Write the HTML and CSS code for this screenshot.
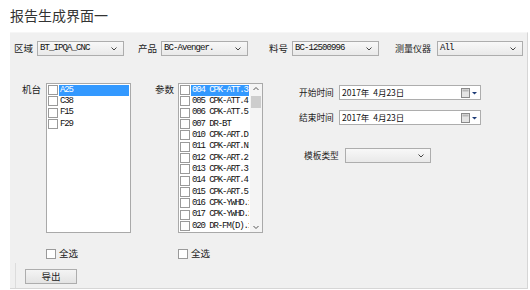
FILE: index.html
```html
<!DOCTYPE html>
<html lang="zh">
<head>
<meta charset="utf-8">
<title>报告生成界面一</title>
<link rel="stylesheet" href="styles.css">
</head>
<body>
<div class="title">报告生成界面一</div>
<div class="panel">
  <div class="toprow">
    <div class="field f1"><span class="lbl">区域</span><div class="combo w87"><span class="ctext">BT_IPQA_CNC</span><svg class="chev" width="6" height="4" viewBox="0 0 6 4"><polyline points="0.5,0.5 3,3 5.5,0.5" fill="none" stroke="#444" stroke-width="1"/></svg></div></div>
    <div class="field f2"><span class="lbl">产品</span><div class="combo w87"><span class="ctext">BC-Avenger.</span><svg class="chev" width="6" height="4" viewBox="0 0 6 4"><polyline points="0.5,0.5 3,3 5.5,0.5" fill="none" stroke="#444" stroke-width="1"/></svg></div></div>
    <div class="field f3"><span class="lbl">料号</span><div class="combo w87"><span class="ctext">BC-12500996</span><svg class="chev" width="6" height="4" viewBox="0 0 6 4"><polyline points="0.5,0.5 3,3 5.5,0.5" fill="none" stroke="#444" stroke-width="1"/></svg></div></div>
    <div class="field f4"><span class="lbl l4">测量仪器</span><div class="combo w86"><span class="ctext">All</span><svg class="chev" width="6" height="4" viewBox="0 0 6 4"><polyline points="0.5,0.5 3,3 5.5,0.5" fill="none" stroke="#444" stroke-width="1"/></svg></div></div>
  </div>

  <div class="main">
    <span class="lbl side l1">机台</span>
    <div class="col">
      <div class="listbox">
        <div class="items">
          <div class="item"><span class="cb"></span><span class="itext sel">A25</span></div>
          <div class="item"><span class="cb"></span><span class="itext">C38</span></div>
          <div class="item"><span class="cb"></span><span class="itext">F15</span></div>
          <div class="item"><span class="cb"></span><span class="itext">F29</span></div>
        </div>
      </div>
      <div class="selall"><span class="cb"></span><span class="lbl">全选</span></div>
    </div>

    <span class="lbl side l2">参数</span>
    <div class="col">
      <div class="listbox">
        <div class="items">
          <div class="item"><span class="cb"></span><span class="itext sel">004 CPK-ATT.3</span></div>
          <div class="item"><span class="cb"></span><span class="itext">005 CPK-ATT.4</span></div>
          <div class="item"><span class="cb"></span><span class="itext">006 CPK-ATT.5</span></div>
          <div class="item"><span class="cb"></span><span class="itext">007 DR-BT</span></div>
          <div class="item"><span class="cb"></span><span class="itext">010 CPK-ART.D</span></div>
          <div class="item"><span class="cb"></span><span class="itext">011 CPK-ART.NI</span></div>
          <div class="item"><span class="cb"></span><span class="itext">012 CPK-ART.2</span></div>
          <div class="item"><span class="cb"></span><span class="itext">013 CPK-ART.3</span></div>
          <div class="item"><span class="cb"></span><span class="itext">014 CPK-ART.4</span></div>
          <div class="item"><span class="cb"></span><span class="itext">015 CPK-ART.5</span></div>
          <div class="item"><span class="cb"></span><span class="itext">016 CPK-YWHD.1</span></div>
          <div class="item"><span class="cb"></span><span class="itext">017 CPK-YWHD.2</span></div>
          <div class="item"><span class="cb"></span><span class="itext">020 DR-FM(D).1</span></div>
        </div>
        <div class="scroll">
          <svg class="sarrow" width="12" height="10" viewBox="0 0 12 10"><polyline points="3.5,6 6,3.5 8.5,6" fill="none" stroke="#555" stroke-width="1"/></svg>
          <div class="thumb"></div>
          <div class="track"></div>
          <svg class="sarrow" width="12" height="10" viewBox="0 0 12 10"><polyline points="3.5,4 6,6.5 8.5,4" fill="none" stroke="#555" stroke-width="1"/></svg>
        </div>
      </div>
      <div class="selall"><span class="cb"></span><span class="lbl">全选</span></div>
    </div>

    <div class="right">
      <div class="drow">
        <span class="lbl dl">开始时间</span>
        <div class="date"><span class="dtext">2017年&nbsp; 4月23日</span><svg class="cal" width="18" height="10" viewBox="0 0 18 10"><rect x="0.5" y="0.5" width="8" height="9" fill="#e4e4e4" stroke="#8a8a8a"/><rect x="1.5" y="1.5" width="6" height="2" fill="#b8b8b8"/><polygon points="11,4 16,4 13.5,6.5" fill="#1e3c78"/></svg></div>
      </div>
      <div class="drow r2">
        <span class="lbl dl">结束时间</span>
        <div class="date"><span class="dtext">2017年&nbsp; 4月23日</span><svg class="cal" width="18" height="10" viewBox="0 0 18 10"><rect x="0.5" y="0.5" width="8" height="9" fill="#e4e4e4" stroke="#8a8a8a"/><rect x="1.5" y="1.5" width="6" height="2" fill="#b8b8b8"/><polygon points="11,4 16,4 13.5,6.5" fill="#1e3c78"/></svg></div>
      </div>
      <div class="drow r3">
        <span class="lbl dl">模板类型</span>
        <div class="combo w86"><span class="ctext"></span><svg class="chev" width="6" height="4" viewBox="0 0 6 4"><polyline points="0.5,0.5 3,3 5.5,0.5" fill="none" stroke="#444" stroke-width="1"/></svg></div>
      </div>
    </div>
  </div>

  <div class="bottom">
    <div class="btn">导出</div>
  </div>
</div>
</body>
</html>
```
FILE: styles.css
```css
* { box-sizing: border-box; }
html, body { margin: 0; padding: 0; background: #ffffff; }
body {
  width: 530px;
  height: 290px;
  overflow: hidden;
  font-family: "Noto Sans CJK SC", "Liberation Sans", sans-serif;
  color: #222;
}
.title {
  height: 32px;
  padding: 6px 0 0 10px;
  font-size: 14px;
  line-height: 18px;
  color: #333;
}
.panel {
  margin-left: 10px;
  width: 518px;
  height: 257px;
  background: #f0f0f0;
  border-top: 1px solid #f6f6f6;
  border-right: 1px solid #d6d6d6;
  border-bottom: 1px solid #d6d6d6;
  display: flex;
  flex-direction: column;
  padding-left: 4px;
}
.lbl {
  font-size: 9.5px;
  line-height: 11px;
  color: #222;
  white-space: nowrap;
}
.toprow {
  display: flex;
  align-items: center;
  margin-top: 8px;
  height: 15px;
}
.field { display: flex; align-items: center; gap: 4px; }
.f2 { margin-left: 14px; }
.f3 { margin-left: 21px; }
.f4 { margin-left: 16px; gap: 5px; }
.l4 { font-size: 9px; width: 37px; }
.combo {
  height: 15px;
  border: 1px solid #adadad;
  background: linear-gradient(#f8f8f8, #e9e9e9);
  display: flex;
  align-items: center;
  justify-content: space-between;
  padding: 0 6px 0 2px;
}
.w87 { width: 87px; }
.w86 { width: 86px; }
.ctext {
  font-family: "Liberation Mono", monospace;
  font-size: 9px;
  letter-spacing: -0.9px;
  line-height: 11px;
  color: #111;
}
.chev { display: block; }
.main {
  display: flex;
  align-items: flex-start;
  margin-top: 27px;
}
.side { padding-top: 1px; }
.l1 { margin-left: 8px; width: 24px; }
.l2 { margin-left: 24px; width: 23px; }
.col { display: flex; flex-direction: column; }
.listbox {
  width: 85px;
  height: 150px;
  background: #fff;
  border: 1px solid #a9a9a9;
  display: flex;
  overflow: hidden;
}
.items {
  flex: 1;
  min-width: 0;
  overflow: hidden;
  padding-top: 0.5px;
}
.item {
  height: 11.33px;
  display: flex;
  align-items: center;
  padding-left: 1px;
}
.cb {
  width: 10px;
  height: 10px;
  flex: none;
  border: 1px solid #9a9a9a;
  background: #fff;
}
.itext {
  flex: 1;
  min-width: 0;
  margin-left: 1px;
  margin-right: 1px;
  padding-left: 1px;
  font-family: "Liberation Mono", monospace;
  font-size: 9px;
  letter-spacing: -1.1px;
  line-height: 11px;
  height: 11px;
  white-space: nowrap;
  overflow: hidden;
  color: #111;
}
.itext.sel { background: #3399ff; color: #fff; }
.scroll {
  width: 12px;
  flex: none;
  display: flex;
  flex-direction: column;
  background: #f4f4f4;
}
.sarrow { display: block; flex: none; }
.thumb {
  height: 12px;
  margin: 2px 1px 0 1px;
  background: #cdcdcd;
  flex: none;
}
.track { flex: 1; }
.selall {
  display: flex;
  align-items: center;
  gap: 3px;
  margin-top: 15px;
}
.right {
  margin-left: 36px;
  padding-top: 2px;
  display: flex;
  flex-direction: column;
}
.drow { display: flex; align-items: center; gap: 6px; height: 15px; }
.dl { font-size: 8.7px; width: 34px; }
.r2 { margin-top: 10px; }
.r3 { margin-top: 23px; margin-left: 5px; gap: 7px; }
.date {
  width: 142px;
  height: 15px;
  border: 1px solid #adadad;
  background: #fff;
  display: flex;
  align-items: center;
  justify-content: space-between;
  padding: 0 1px 0 2px;
}
.dtext {
  font-family: "Noto Sans CJK SC", "Liberation Sans", sans-serif;
  font-size: 8.5px;
  line-height: 11px;
  color: #111;
  white-space: nowrap;
}
.cal { display: block; }
.bottom {
  margin-top: auto;
  height: 25px;
  margin-left: 1px;
  border-left: 1px solid #dcdcdc;
  padding: 6px 0 0 9px;
}
.btn {
  width: 52px;
  height: 15px;
  border: 1px solid #adadad;
  background: linear-gradient(#f4f4f4, #e3e3e3);
  font-size: 9.5px;
  line-height: 13px;
  text-align: center;
  color: #222;
}
```
